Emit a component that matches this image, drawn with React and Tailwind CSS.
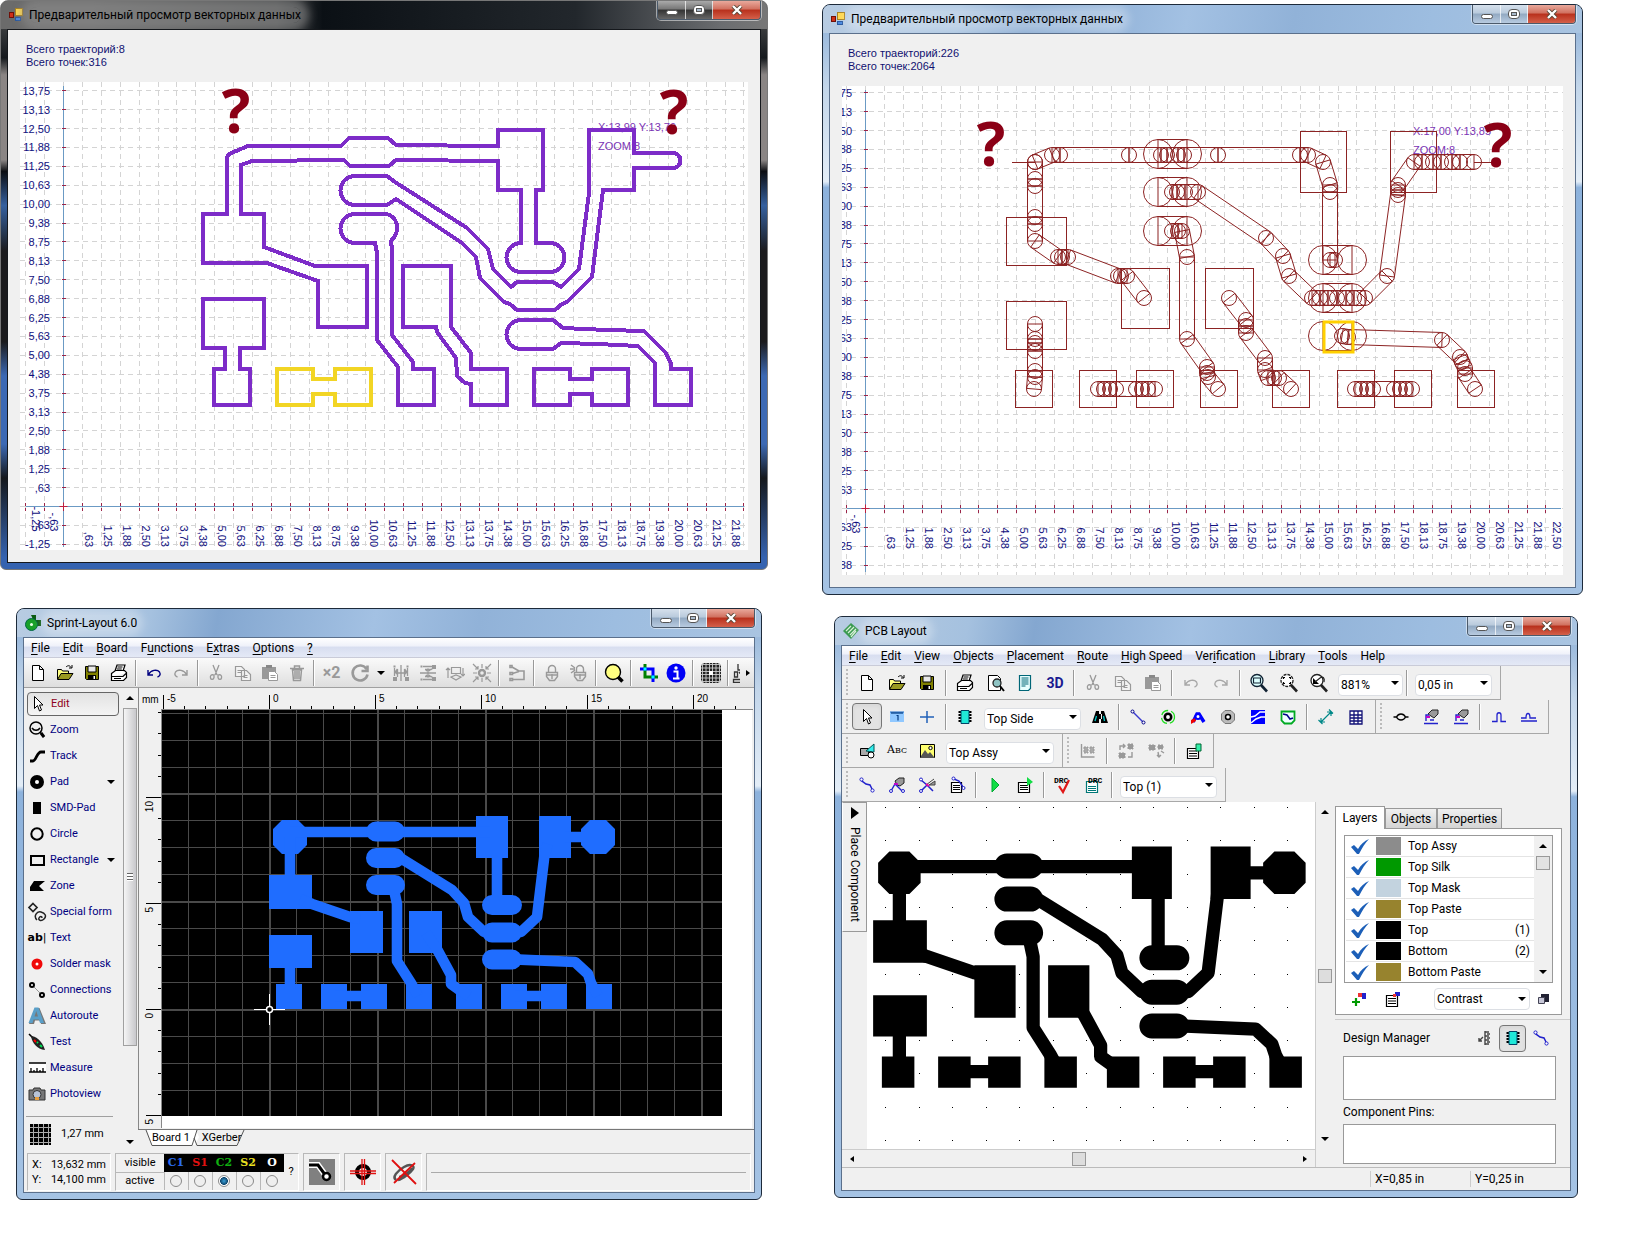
import { useState } from 'react'
import clsx from 'clsx'

const GLYPHS = {
  new: <path d="M4.5 2.5h7l4 4v11h-11zM11.5 2.5v4h4" fill="#fff" stroke="#000" />,
  open: <><path d="M2.5 16V6.500h4l1 1.500h6v3" fill="#ffff80" stroke="#000" /><path d="M2.500 16.500l3.500-6h12l-4 6z" fill="#9a9a20" stroke="#000" /><path d="M11 4c2-2 4-1.500 5 0.500M17 2v3h-3" fill="none" stroke="#000" /></>,
  save: <><path d="M3.500 3.500h13v13h-12l-1-1z" fill="#808000" stroke="#000" /><path d="M6 3h8v6H6z" fill="#e8e8e8" stroke="#000" /><path d="M6 12h8v4.500H6z" fill="#000" /><path d="M11.500 13h1.500v3h-1.500z" fill="#fff" /></>,
  print: <path d="M6 8l2-6h8l-2 6M8.500 4h5M7.800 6h5M2.500 10.500l4-3h9l2 2v5l-3 3h-12zM2.500 13.500h11.500l3-3M5 15.500h7" fill="#fff" stroke="#000" strokeWidth="1.200" />,
  undo: <path d="M4 7v5h5M4.500 11.500C7 7 13 6 15.500 9c1.500 2.500 0 4.500-2 5" fill="none" stroke="currentColor" strokeWidth="1.400" />,
  redo: <path d="M16 7v5h-5M15.500 11.500C13 7 7 6 4.500 9c-1.500 2.500 0 4.500 2 5" fill="none" stroke="currentColor" strokeWidth="1.400" />,
  cut: <path d="M7 2l4 10M13 2L9 12M8 12c-3-1-4 1-3.500 3s3 2 3.500-0.500zM12 12c3-1 4 1 3.500 3s-3 2-3.500-0.500z" fill="none" stroke="#999" strokeWidth="1.300" />,
  copy: <path d="M2.500 3.500h6l3 3v7h-9zM4.500 7.500h4M4.500 9.500h4M8.500 7.500h5l4 4v6h-9zM10.500 12.500h4M10.500 14.500h4" fill="#f3f3f3" stroke="#999" strokeWidth="1.200" />,
  paste: <><path d="M2 4h14v12H2z" fill="#999" /><path d="M6 2h6v3H6z" fill="#888" /><path d="M8.500 8.500h6l3 3v6h-9zM10.500 12.500h5M10.500 14.500h5" fill="#fff" stroke="#999" /></>,
  trash: <path d="M3 5.500h14M7.500 5V3h5v2M5.500 7h9l-1 10.500h-7zM8 8v8M10 8v8M12 8v8" fill="none" stroke="#999" strokeWidth="1.500" />,
  rotate: <path d="M16.500 6a7.500 7.500 0 1 0 1 5.500M17.500 2.500v5.500h-6" fill="none" stroke="#999" strokeWidth="2.600" />,
  mirrorH: <><path d="M10 2v16M3.500 5v8M16.500 5v8M6.500 6l-3 4M13.500 6l3 4M6.500 6v8M13.500 6v8M5.500 10h9M7 8l-2 2 2 2M13 8l2 2-2 2" fill="none" stroke="#999" strokeWidth="1.300" /><path d="M3.500 2.500v2M16.500 2.500v2M3 15h2v2H3zM15 15h2v2h-2z" fill="none" stroke="#999" strokeWidth="2" /></>,
  mirrorV: <><path d="M2 10h16M5 3.500h9M5 16.500h9M7 6.500h6l3-2M7 13.500h6l3 2M10 6v8M8 8l2-2 2 2M8 12l2 2 2-2" fill="none" stroke="#999" strokeWidth="1.300" /><path d="M2.500 3.500h2M2.500 16.500h2M15 3h2v2h-2zM15 15h2v2h-2z" fill="none" stroke="#999" strokeWidth="2" /></>,
  flip: <path d="M3 15V5M1 7l2-2 2 2M6.500 4.500h9v6h-9zM18 5v8M16 11l2 2 2-2M6 14l5-2 5 2-5 3z" fill="none" stroke="#999" strokeWidth="1.200" />,
  snap: <><circle cx="10" cy="10" r="3" fill="none" stroke="#999" strokeWidth="2.400" /><path d="M1 1l5 5M6 3v3H3M19 1l-5 5M14 3v3h3M1 19l5-5M3 14h3v3M19 19l-5-5M17 14h-3v3M10 1v4M10 15v4M1 10h4M15 10h4" fill="none" stroke="#999" strokeWidth="1.200" /></>,
  link: <path d="M3 2.500h2v2H3zM3 15.500h2.500v2H3zM3 9.500h2.500v2H3zM5 4l7 4M5.500 10.500l6.500-2M6 16.500h11V8h-5" fill="none" stroke="#999" strokeWidth="1.600" />,
  lock: <path d="M6.500 9V6a3.500 3.500 0 0 1 7 0v3M4.500 9.500h11v4l-3 4h-5l-3-4zM4.500 12h11M10 11v5" fill="none" stroke="#999" strokeWidth="1.400" />,
  unlock: <path d="M7.500 9V6a3.500 3.500 0 0 1 7 0v3M5.500 9.500h11v4l-3 4h-5l-3-4zM5.500 12h11M11 11v5M1 6h5M2 2l4 3M2 10l4-3" fill="none" stroke="#999" strokeWidth="1.400" />,
  bulb: <><circle cx="9" cy="9" r="7.500" fill="#ffff80" stroke="#000" strokeWidth="1.400" /><path d="M14 14l4.500 4.500" stroke="#000" strokeWidth="3.500" /></>,
  crop: <><path d="M6 1v13h13" fill="none" stroke="#008000" strokeWidth="3" /><path d="M1 6h13v13" fill="none" stroke="#00f" strokeWidth="3" /><path d="M4.500 4.500h3v3h-3zM12.500 12.500h3v3h-3z" fill="#0ff" /></>,
  info: <><circle cx="10" cy="10" r="9.500" fill="#0000f5" /><circle cx="10" cy="5" r="1.700" fill="#fff" /><path d="M7.500 8.500h4v6.500M7 15.500h6.500" stroke="#fff" strokeWidth="2" fill="none" /></>,
  dots: <><path d="M3 0h14l3 3v14l-3 3H3l-3-3V3z" fill="#222" /><path d="M1.500 0v20M5 0v20M8.500 0v20M11.500 0v20M15 0v20M18.500 0v20M0 1.500h20M0 5h20M0 8.500h20M0 11.500h20M0 15h20M0 18.500h20" stroke="#ccc" strokeWidth=".9" /><path d="M8 8h4v4H8z" fill="#fff" /></>,
  board: <path d="M6 1v6h4M2.500 9h3v5h-3zM7 9l4 5M1.500 16.500h10v3h-10z" fill="none" stroke="#333" strokeWidth="1.300" />,
  cursor: <path d="M6.500 2.500v12l3-3 2 5.500 2-1-2-5h3.500z" fill="#fff" stroke="#000" />,
  zoom: <><circle cx="9" cy="8" r="6" fill="#eee" stroke="#000" strokeWidth="1.500" /><path d="M5 8c2 3 6 3 8 0M13 12l4 5" fill="none" stroke="#000" strokeWidth="1.500" /><path d="M14 13l3 4" stroke="#000" strokeWidth="3" /></>,
  track: <path d="M3 15h3c3 0 4-9 8-9h4" fill="none" stroke="#000" strokeWidth="2.800" />,
  pad: <circle cx="10" cy="10" r="4.500" fill="#fff" stroke="#000" strokeWidth="5" />,
  smd: <path d="M6 4h8v12H6z" fill="#000" />,
  circle: <circle cx="10" cy="10" r="5.700" fill="none" stroke="#000" strokeWidth="2" />,
  rect: <path d="M4 6h13v9H4z" fill="none" stroke="#000" strokeWidth="2" />,
  zone: <path d="M3 15v-4l4-6h11l-6 5 5 5z" fill="#000" />,
  special: <><path d="M6 1.500l4 4-4 4-4-4z" fill="none" stroke="#222" strokeWidth="1.700" /><path d="M10 18c-4-4 0-9 4-8s6 4 3 7-6 1-5-1 3-2 3 0" fill="none" stroke="#222" strokeWidth="1.500" /></>,
  mask: <circle cx="10" cy="10" r="3.500" fill="#fff" stroke="#f00808" strokeWidth="4" />,
  conn: <><path d="M5 5l10 10" stroke="#999" /><circle cx="5" cy="5" r="2" fill="#fff" stroke="#000" strokeWidth="2" /><circle cx="15" cy="15" r="2" fill="#fff" stroke="#000" strokeWidth="2" /></>,
  auto: <><path d="M2 18L8.500 2h4L19 18h-5l-1-3.500H8L7 18z" fill="#777" /><path d="M1.500 17L7.500 1.500h4L17 17h-4l-1.200-3.500H6.500L5.500 17zM7.500 10.500h3.500L9.300 5z" fill="#5a9fc8" /></>,
  test: <><path d="M2 2l5 5" stroke="#000" strokeWidth="1.600" /><path d="M4 4c4 0 11 4 14 14-8-1-13-7-14-14z" fill="#222" /><path d="M10 10l1 1M13 13l2 2" stroke="#0d5" strokeWidth="2" /><path d="M7 8l2 2" stroke="#f00" strokeWidth="2" /></>,
  measure: <><path d="M2 5h17v9H2z" fill="#fff" /><path d="M2 5h17M2 14h17M4 14v-4M7 14v-2M10 14v-4M13 14v-2M16 14v-4" stroke="#000" strokeWidth="1.300" /></>,
  photo: <><path d="M2 6h4l1-2h6l1 2h4v10H2z" fill="#777" stroke="#333" /><circle cx="10" cy="10.500" r="4" fill="#b8c4d8" stroke="#333" /><path d="M8 13h4v3H8z" fill="#e8a040" /></>,
  preview: <><path d="M3.500 2.500h9l3 3v12h-12z" fill="#fff" stroke="#000" /><circle cx="12" cy="10" r="4" fill="#8fc4c4" stroke="#222" strokeWidth="1.300" /><path d="M15 13l4 5" stroke="#000" strokeWidth="2" /></>,
  doc: <path d="M4.500 2.500h11v13l-2 2h-9zM6.500 5h7M6.500 7h7M6.500 9h7M6.500 11h7M6.500 13h4" fill="#e8ffff" stroke="#067" strokeWidth="1.200" />,
  magBox: <><circle cx="8" cy="7.500" r="6" fill="#dff" stroke="#123" strokeWidth="1.300" /><path d="M4.500 5h7v5h-7z" fill="none" stroke="#123" strokeWidth="1.200" /><path d="M12 12l6 6.500" stroke="#123" strokeWidth="2.600" /></>,
  magFit: <><circle cx="8" cy="7.500" r="6" fill="#fff" stroke="#222" strokeWidth="1.300" strokeDasharray="3 1" /><path d="M4.500 6V4.500H6M10 4.500h1.500V6M4.500 9v1.500H6M10 10.500h1.500V9" fill="none" stroke="#000" strokeWidth="1.200" /><path d="M12 12l6 6.500" stroke="#222" strokeWidth="2.600" /></>,
  magPrev: <><circle cx="8" cy="7.500" r="6" fill="#fff" stroke="#222" strokeWidth="1.300" /><path d="M4 5v6h6z" fill="#000" /><path d="M6 9l5-4c3-2 5 0 4 4" fill="none" stroke="#222" strokeWidth="1.200" /><path d="M12 12l6 6.500" stroke="#222" strokeWidth="2.600" /></>,
  ruler: <><path d="M3 5h14v10H3z" fill="#90c8ff" /><path d="M3 5h14" stroke="#1c6cc8" /><path d="M5 5v2M7 5v2M9 5v2M11 5v2M13 5v2M15 5v2M9.500 8.500h1.500v5" fill="none" stroke="#013a80" strokeWidth="1.200" /></>,
  plus: <path d="M10 4v12M3 10h14" stroke="#2060b8" strokeWidth="1.500" />,
  chip: <><path d="M3.500 5h13M3.500 8h13M3.500 11h13M3.500 14h13" stroke="#000" strokeWidth="2" /><path d="M6 3.500h8v13H6z" fill="#20e8d8" stroke="#046" /></>,
  binoc: <><path d="M2 16l2-6 2-6h3v12zM18 16l-2-6-2-6h-3v12zM8 7h4v5H8z" fill="#000" /><path d="M5 14l1.500-5M14.500 14l-1-5" stroke="#0cc" strokeWidth="1.300" /></>,
  seg: <><path d="M5 5l10 10" stroke="#3a3ad0" strokeWidth="1.400" /><circle cx="4.500" cy="4.500" r="1.500" fill="#fff" stroke="#008" /><circle cx="15.500" cy="15.500" r="1.500" fill="#fff" stroke="#008" /></>,
  via: <><circle cx="10" cy="10" r="3.200" fill="#fff" stroke="#000" strokeWidth="2.600" /><circle cx="10" cy="10" r="6.500" fill="none" stroke="#2d2" strokeWidth="1.300" strokeDasharray="8 3" /></>,
  aTool: <><path d="M5 15l4-8h2l5 8" fill="none" stroke="#00f" strokeWidth="3.500" /><path d="M3 17v-4l4-2 1 3z" fill="#e00" /><circle cx="10" cy="9.500" r="2.500" fill="#fff" stroke="#00f" strokeWidth="2" /></>,
  hole: <><path d="M7 3.500h6L16.500 7v6L13 16.500H7L3.500 13V7z" fill="#bbb" stroke="#777" /><circle cx="10" cy="10" r="2.500" fill="#fff" stroke="#000" strokeWidth="1.500" /></>,
  pour: <><path d="M3 3h14v14H3z" fill="#00f" /><path d="M3 10l4-1 5-4h5M3 16l5-4 5-2 4 0" fill="none" stroke="#fff" strokeWidth="1.500" /></>,
  shape: <><path d="M3.500 4.500h13v9l-3 3h-7l-3-3z" fill="#eff" stroke="#0a2" strokeWidth="1.800" /><path d="M5 7l4 1 3 4 3-1" fill="none" stroke="#008" strokeWidth="1.500" /></>,
  dim: <path d="M5 15L15 5M5 11v4h4M11 5h4v4M2.500 13l4 4M13 2.500l4 4" fill="none" stroke="#088" strokeWidth="1.200" />,
  table: <path d="M4 4h12v13H4zM4 8h12M4 11h12M4 14h12M8 4v13M12 4v13" fill="#fff" stroke="#117" strokeWidth="1.300" />,
  loop: <path d="M2.500 10h3c2-4 7-4 9 0h3M5.500 10c2 4 7 4 9 0" fill="none" stroke="#000" strokeWidth="1.400" />,
  hand: <><path d="M7 7l4-4h6v4l-4 4-3-2z" fill="#999" stroke="#222" /><path d="M5 14V8h3M3 16.500h14M9 13h4" fill="none" stroke="#22c" strokeWidth="1.400" /><path d="M5 10l4 0" stroke="#c0c" strokeWidth="1.800" /></>,
  pulse: <path d="M3 14.500h5V8c0-3 4-3 4 0v6.500h5" fill="none" stroke="#22c" strokeWidth="1.300" />,
  pulse2: <path d="M2 11h5c0-6 4-6 4 0h6M2 14h16" fill="none" stroke="#22c" strokeWidth="1.300" />,
  shapes: <><path d="M3.500 7.500h8v7h-8z" fill="#aaa" stroke="#000" /><path d="M9 10l8-7v8z" fill="#3ee" stroke="#055" /><circle cx="14" cy="14" r="3" fill="#fff" stroke="#000" /></>,
  image: <><path d="M3.500 3.500h14v13h-14z" fill="#ffff70" stroke="#000" /><path d="M4 15l4-6 3 4 2-2 4 5v1H4z" fill="#555" /><circle cx="13.500" cy="7" r="1.700" fill="#fff" stroke="#000" /></>,
  align: <><path d="M3.500 3v13h13" fill="none" stroke="#999" strokeWidth="1.400" /><path d="M6 6h4v6H6zM12 6h4v6h-4z" fill="#aaa" stroke="#999" strokeDasharray="2 1" /></>,
  group: <><path d="M12 3h5v5h-5zM3 12h6v5H3z" fill="#999" stroke="#999" strokeDasharray="2 1" /><path d="M4 9V5h5M7 3l2 2-2 2M16 11v5h-4" fill="none" stroke="#999" strokeWidth="1.400" /></>,
  ungroup: <><path d="M3 4h6v5H3zM12 4h5v4h-5z" fill="#999" stroke="#999" strokeDasharray="2 1" /><path d="M12 11l1 5M15 10l3 2M11 14l2 2 2-2" fill="none" stroke="#999" strokeWidth="1.400" /></>,
  props: <><path d="M3.500 7.500h11v10h-11zM5 10h8M5 12.500h8M5 15h8" fill="#fff" stroke="#000" strokeWidth="1.200" /><path d="M12 3h5v7h-5z" fill="#3ea" stroke="#063" /></>,
  route: <><path d="M5 5v1l4 3 4 1 2 4" fill="none" stroke="#22c" strokeWidth="1.500" /><circle cx="4.500" cy="4.500" r="1.600" fill="#fff" stroke="#22c" /><circle cx="15.500" cy="15.500" r="1.600" fill="#fff" stroke="#22c" /></>,
  routeHand: <><path d="M8 6l4-3h5v5l-4 3-3-1z" fill="#999" stroke="#222" /><path d="M4 16l4-7 7 7" fill="none" stroke="#22c" strokeWidth="1.400" /><circle cx="4" cy="16" r="1.500" fill="#fff" stroke="#22c" /><circle cx="16" cy="16" r="1.500" fill="#fff" stroke="#22c" /><path d="M7 9h4" stroke="#c0c" strokeWidth="1.800" /></>,
  routeCut: <><path d="M4 5l6 5-6 6M10 10l6 6" fill="none" stroke="#22c" strokeWidth="1.500" /><path d="M9 10l8-6M12 10l6-4v4z" stroke="#444" fill="#999" /><path d="M9 9l3 2" stroke="#e0a" strokeWidth="2" /><circle cx="4" cy="4.500" r="1.500" fill="#fff" stroke="#22c" /><circle cx="4" cy="16" r="1.500" fill="#fff" stroke="#22c" /></>,
  routeList: <><path d="M4.500 7.500h10v10h-10zM6 10.500h7M6 12.500h7M6 14.500h7" fill="#fff" stroke="#000" strokeWidth="1.200" /><path d="M7 4l5 2 4 6" fill="none" stroke="#22c" strokeWidth="1.400" /><circle cx="6.500" cy="3.500" r="1.500" fill="#fff" stroke="#22c" /><circle cx="16.500" cy="13" r="1.500" fill="#fff" stroke="#22c" /></>,
  play: <path d="M7 3l7 7-7 7z" fill="#1d4" stroke="#0a3" />,
  playList: <><path d="M3.500 7.500h11v10h-11zM5 10.500h8M5 12.500h8M5 14.500h8" fill="#fff" stroke="#000" strokeWidth="1.200" /><path d="M12 2l6 5-6 4z" fill="#1d4" /></>,
  drc: <><text x="1" y="8" fontSize="8" fontWeight="bold" fontFamily="Liberation Mono, monospace">DRC</text><path d="M6 11l4 6 6-12" fill="none" stroke="#e01818" strokeWidth="2.200" /></>,
  drcList: <><path d="M3.500 6.500h11v11h-11zM5 11.500h8M5 13.500h8M5 15.500h8" fill="#fff" stroke="#077" strokeWidth="1.200" /><text x="5" y="8" fontSize="8" fontWeight="bold" fontFamily="Liberation Mono, monospace">DRC</text></>,
  addLayer: <><path d="M3 13h8M7 9v8" stroke="#090" strokeWidth="2.200" /><path d="M9 4h4v4H9z" fill="#e33" /><path d="M13 4h4v6h-4z" fill="#22c" /></>,
  layerList: <><path d="M3.500 6.500h11v11h-11zM5 9.500h8M5 12h8M5 14.500h8" fill="#fff" stroke="#000" strokeWidth="1.200" /><path d="M12 3h5v4h-5z" fill="#22c" /><path d="M10 5h3v3h-3z" fill="#e33" /></>,
  squares: <><path d="M7 5h8v8H7z" fill="#223" /><path d="M4.500 8.500h6v6h-6z" fill="#c8c8d8" stroke="#445" /></>,
  tree: <path d="M11 3v14M11 4h4M11 8h4M11 12h4M11 16h4M9 9L5 13M5 10v3h3M13 6h3M13 10h3M13 14h3" fill="none" stroke="#444" strokeWidth="1.400" />,
}

function Glyph({ name }) {
  return <svg viewBox="0 0 20 20" className="size-5 shrink-0" aria-hidden="true">{GLYPHS[name]}</svg>
}

function Caret({ className }) {
  return <svg viewBox="0 0 8 4" className={clsx('h-1 w-2', className)} aria-hidden="true"><path d="M0 0h8L4 4z" /></svg>
}

/* ---------- window frame ---------- */

const frames = {
  dark: 'border-[#777] bg-[linear-gradient(180deg,#5a5a5a_0,#15191d_10%,#8a8584_13%,#8a8584_28%,#0c0e12_30%,#35609f_36%,#1b1b1d_44%,#1b1b1d_60%,#3c69b4_66%,#3c69b4_78%,#15181c_84%,#3563b0_98%)]',
  blue: 'border-[#1d2a3a] bg-[linear-gradient(180deg,#9dbbdd_0,#9dbbdd_5%,#c3d6ea_14%,#e3edf7_30%,#8db2dc_31%,#a5c3e4_100%)]',
}
const bars = {
  dark: 'bg-[linear-gradient(90deg,#6b6b6b_0,#6b6b6b_12%,#454748_36%,#0b1015_42%,#22272c_75%,#6b6d70_94%,#777_100%)]',
  blue: 'bg-[linear-gradient(100deg,#b8cce2_0,#a5c1df_18%,#84a7d0_27%,#a3c1e3_48%,#91b2d8_62%,#9dbde0_80%,#a9c4e1_100%)]',
}

function Window({ title, icon, tone = 'blue', className, children }) {
  const btn = 'flex items-center justify-center border-r border-white/70'
  const btnTone = tone === 'dark'
    ? 'bg-[linear-gradient(180deg,#aaa_0,#777_45%,#333_50%,#666_100%)]'
    : 'bg-[linear-gradient(180deg,#d5e0ec_0,#b9cadc_45%,#92a9c2_50%,#b8cbe0_100%)]'
  return (
    <section className={clsx('flex flex-col overflow-hidden rounded-t-lg rounded-b-md border px-[6px] pb-[6px]', frames[tone], className)}>
      <header className={clsx('-mx-[6px] flex h-7 items-start justify-between px-[6px]', bars[tone])}>
        <div className="flex h-7 items-center gap-[6px] pl-[2px] text-xs text-black">
          {icon}
          <h2 className={clsx('rounded-full', tone === 'dark' ? 'bg-[#8c8c8c]/60 shadow-[0_0_8px_8px_rgba(140,140,140,0.6)]' : 'bg-white/30 shadow-[0_0_8px_6px_rgba(255,255,255,0.3)]')}>{title}</h2>
        </div>
        <div className="flex h-[19px] overflow-hidden rounded-b border border-t-0 border-[#4b5a6b] ring-1 ring-white/50">
          <button type="button" aria-label="Minimize" className={clsx(btn, btnTone, 'w-7')}>
            <span className="mt-1 h-[5px] w-3 rounded-sm border border-[#555] bg-white" />
          </button>
          <button type="button" aria-label="Maximize" className={clsx(btn, btnTone, 'w-[27px]')}>
            <span className="flex h-[10px] w-3 items-center justify-center rounded-sm border border-[#555] bg-white">
              <span className="h-1 w-[6px] border border-[#555] bg-[#abc]" />
            </span>
          </button>
          <button type="button" aria-label="Close" className="flex w-[47px] items-center justify-center bg-[linear-gradient(180deg,#e9a99c_0,#d0705f_45%,#b8301c_50%,#d4604a_100%)]">
            <svg viewBox="0 0 12 10" className="h-[10px] w-3" aria-hidden="true">
              <path d="M2 1l8 8M10 1L2 9" stroke="#543" strokeWidth="4" />
              <path d="M2 1l8 8M10 1L2 9" stroke="#fff" strokeWidth="2.400" />
            </svg>
          </button>
        </div>
      </header>
      <div className={clsx('border bg-[#f0f0f0]', tone === 'dark' ? 'border-[#15181c]' : 'border-[#5b708c]')}>{children}</div>
    </section>
  )
}

const FormIcon = () => (
  <svg viewBox="0 0 14 14" className="size-[14px]" aria-hidden="true">
    <rect x=".5" y="4.500" width="4" height="5" fill="#d03018" stroke="#701008" />
    <rect x="6.500" y=".5" width="7" height="7" fill="#ffd850" stroke="#a88020" />
    <rect x="6.500" y="9.500" width="5" height="3" fill="#4888e0" stroke="#2858a0" />
  </svg>
)

/* ---------- vector preview ---------- */

const fmt = n => {
  const s = Math.abs(n).toFixed(3)
  const r = (Math.round(Number(s) * 100 + 0.01) / 100).toFixed(2).replace('.', ',').replace(/^0/, '')
  return (n < 0 ? '-' : '') + r
}
const range = (a, b) => Array.from({ length: b - a + 1 }, (_, i) => a + i)
const PITCH = 18.9

function Plot({ box, ox, oy, left, down, right, labelX, labelEnd, last, hint, marks, children }) {
  const [bx, by, bw, bh] = box
  const xs = range(-left, 36)
  const ys = range(-down, 22)
  return (
    <svg viewBox={box.join(' ')} className="block h-auto w-full bg-white font-['Liberation_Sans',Arial,sans-serif]" fontSize="11" role="img" aria-label="Vector data preview">
      <g shapeRendering="crispEdges">
        <g stroke="#d4d4d4" strokeDasharray="5 4">
          {xs.map(k => <path key={k} d={`M${ox + k * PITCH} ${by}v${bh}`} />)}
          {ys.map(k => <path key={k} d={`M${bx} ${oy - k * PITCH}h${bw}`} />)}
        </g>
        <path d={`M${ox} ${by + 4}V${by + bh - 3}M${ox - left * PITCH} ${oy}H${right}`} stroke="#6b9ac4" fill="none" />
        <g stroke="#9c2448">
          {xs.map(k => <path key={k} d={`M${ox + k * PITCH} ${oy - 4}v3m0 2v3`} />)}
          {ys.map(k => <path key={k} d={`M${ox - 2} ${oy - k * PITCH}h4`} />)}
        </g>
      </g>
      <path d={`M${ox - 4} ${oy}h8M${ox} ${oy - 4}v8`} stroke="#c02040" />
      <g fill="#101080">
        {ys.filter(k => k !== 0).map(k => (
          <text key={k} x={labelX} y={oy - k * PITCH + 4} textAnchor="end">{fmt(k * 0.625)}</text>
        ))}
        {xs.filter(k => k > 0 && k <= last).map(k => (
          <text key={k} textAnchor="end" transform={`translate(${ox + 21 + (k - 1) * 19.05} ${labelEnd}) rotate(90)`}>{fmt(k * 0.625)}</text>
        ))}
        {xs.filter(k => k < 0).map(k => (
          <text key={k} textAnchor="end" transform={`translate(${ox - 14 + (k + 1) * 18} ${oy + 25}) rotate(90)`}>{fmt(k * 0.625)}</text>
        ))}
      </g>
      <g fill="#7b34b4">
        <text x={hint.x} y={hint.y}>{hint.pos}</text>
        <text x={hint.x} y={hint.y + 19}>ZOOM:8</text>
      </g>
      {children}
      <g fill="#8b0016" fontSize="60" fontWeight="bold" className="font-['Open_Sans',sans-serif]" textAnchor="middle">
        {marks.map(([x, y]) => <text key={x} x={x} y={y}>?</text>)}
      </g>
    </svg>
  )
}

function Preview({ tracks, points, children, ...win }) {
  return (
    <Window title="Предварительный просмотр векторных данных" icon={<FormIcon />} {...win}>
      <div className="p-3 pt-0">
        <div className="flex h-[52px] flex-col justify-center pl-[6px] pb-2 pt-2 font-['Liberation_Sans',Arial,sans-serif] text-[11px] leading-[13px] text-[#101070]">
          <p>Всего траекторий:{tracks}</p>
          <p>Всего точек:{points}</p>
        </div>
        {children}
      </div>
    </Window>
  )
}

const outlines = [
  'M203 214H227V157L229 154 248 146H341L349 138H388L396 145 498 146V130H543V190H536V243H550A14.500 14.500 0 0 1 550 272H521A14.500 14.500 0 0 1 521 243V190H498V161L396 160 389 166H350L344 160 252 161 241 165V214H264V247L315 266H367V327H318V281L267 263H203Z',
  'M355 176H387L395 182 467 228 488 249 493 269 511 287 517 282H553L561 287 579 269 589 193V130H634V153H673A7.500 7.500 0 0 1 673 168H634V190H603L592 277 567 302 562 304 555 310H517L510 304 504 302 480 278 476 257 462 243 396 199 387 205H355A14.500 14.500 0 0 1 355 176Z',
  'M355 214H384C397 214 402 230 391 241L392 250V335L413 362V369H434V405H398V367L377 340V253L375 243H355A14.500 14.500 0 0 1 355 214Z',
  'M403 266H451V327L471 353V369H507V405H471V384L465 383 457 376 456 358 437 332 436 327H403Z',
  'M203 299H264V348H240V369H250V405H214V369H225V348H203Z',
  'M534 369H570V379H592V369H628V405H592V394H570V405H534Z',
  'M521 320H553L563 328 607 330 644 331 665 352 671 363V369H691V405H655V363L638 346 598 344 561 343 553 349H521A14.500 14.500 0 0 1 521 320Z',
]

const runs = [
  [[1035, 162], [1052, 155], [1060, 155], [1129, 155], [1161, 155], [1167, 155], [1178, 155], [1184, 155], [1218, 155], [1300, 155], [1308, 155], [1323, 162], [1330, 185], [1330, 192], [1330, 260], [1335, 260]],
  [[1035, 162], [1035, 179], [1035, 186], [1035, 217], [1035, 224], [1035, 241], [1058, 257], [1062, 257], [1068, 257], [1118, 276], [1121, 276], [1127, 276], [1144, 298]],
  [[1172, 192], [1177, 192], [1185, 192], [1198, 192], [1266, 238], [1283, 256], [1289, 276], [1312, 298], [1320, 298], [1328, 298], [1337, 298], [1346, 298], [1354, 298], [1365, 298], [1387, 276], [1398, 195], [1398, 190], [1398, 185], [1414, 162], [1422, 162], [1433, 162], [1441, 162], [1452, 162], [1460, 162], [1474, 162]],
  [[1172, 231], [1178, 231], [1182, 231], [1187, 257], [1187, 339], [1207, 367], [1207, 373], [1208, 377], [1218, 389]],
  [[1229, 298], [1246, 320], [1246, 326], [1246, 333], [1265, 358], [1265, 370], [1268, 378], [1274, 378], [1279, 378], [1291, 389]],
  [[1035, 324], [1035, 339], [1035, 343], [1035, 351], [1035, 371], [1035, 377], [1034, 389]],
  [[1098, 389], [1104, 389], [1110, 389], [1116, 389], [1136, 389], [1142, 389], [1148, 389], [1155, 389]],
  [[1355, 389], [1361, 389], [1367, 389], [1373, 389], [1394, 389], [1400, 389], [1406, 389], [1412, 389]],
  [[1342, 336], [1348, 337], [1442, 340], [1460, 357], [1462, 362], [1465, 368], [1465, 374], [1475, 389]],
]
const pads = [
  [1006, 217, 60, 48], [1006, 301, 60, 48], [1121, 268, 48, 60], [1205, 268, 48, 60], [1300, 131, 46, 61], [1390, 131, 46, 61],
  ...[1015, 1079, 1136, 1200, 1272, 1337, 1394, 1457].map(x => [x, 370, 37, 37]),
]
const ovals = [[1158, 154], [1158, 192], [1158, 231], [1323, 260], [1323, 298], [1323, 336]]

// one capsule per segment: two sides and a chord across each end
function segment([x1, y1], [x2, y2], r = 7.5) {
  const len = Math.hypot(x2 - x1, y2 - y1) || 1
  const nx = (-(y2 - y1) / len) * r
  const ny = ((x2 - x1) / len) * r
  return `M${x1 + nx} ${y1 + ny}L${x2 + nx} ${y2 + ny}L${x2 - nx} ${y2 - ny}L${x1 - nx} ${y1 - ny}Z`
}

/* ---------- board artwork shared by both editors ---------- */

const octagon = (cx, cy) => `M${cx - 8} ${cy - 17}h16l9 9v16l-9 9h-16l-9-9v-16z`

function Copper({ color }) {
  return (
    <g fill={color} stroke="none">
      <path d={octagon(290, 838) + octagon(598, 838)} />
      <path d="M269 876h43v34h-43zM269 936h43v33h-43zM350 912h33v42h-33zM409 912h33v42h-33zM476 817h32v42h-32zM539 817h32v42h-32z" />
      {[276, 321, 361, 406, 456, 501, 541, 586].map(x => <path key={x} d={`M${x} 985h26v25h-26z`} />)}
      <g fill="none" stroke={color} strokeWidth="10.600" strokeLinejoin="round">
        <path d="M290 838V880M290 833H490M497 855V906M290 965V990M335 997H370M515 997H550M565 838H585" />
        <path d="M300 900L312 905 350 918 360 920M394 859L402 860 452 891 464 904 468 918 484 933H521L537 918 544.500 856 548 845" />
        <path d="M393 886L397 905V962L411 984 418 997M426 934L438 952 451 976V985L458 990 469 997M505 960L575 963 588 975 591 984 598 997" />
      </g>
      <g fill="none" stroke={color} strokeWidth="20" strokeLinecap="round">
        <path d="M376 832.500h19M376 859h19M376 886h19M492 906h20M492 933.500h20M492 960.500h20" />
      </g>
    </g>
  )
}

/* ---------- controls ---------- */

function Menu({ items }) {
  return (
    <nav className="flex h-5 items-center gap-[13px] border-b border-[#c9cbd8] bg-[linear-gradient(180deg,#fff_0,#f0f2fa_40%,#d8def0_50%,#e4e9f6_100%)] pl-[7px] text-xs text-black">
      {items.map(([before, key, after]) => (
        <button type="button" key={before + key + after} className="whitespace-nowrap">{before}<u className="underline-offset-2">{key}</u>{after}</button>
      ))}
    </nav>
  )
}

function Sep() {
  return <span className="mx-[3px] h-[26px] w-[2px] shrink-0 border-l border-[#999] bg-white" />
}

function Grip() {
  return <span className="mx-1 h-7 w-[2px] shrink-0 bg-[repeating-linear-gradient(180deg,#bbb_0,#bbb_2px,transparent_2px,transparent_4px)]" />
}

function Tool({ name, wide, pressed, className }) {
  return (
    <button type="button" aria-label={name} className={clsx('flex h-[27px] shrink-0 items-center justify-center', wide ? 'w-[30px]' : 'w-[27px]', pressed && 'rounded border border-[#777] bg-[#e2e2e2] shadow-inner', className)}>
      <Glyph name={name} />
    </button>
  )
}

function Combo({ label, value, className }) {
  return (
    <div className={clsx('relative h-[22px] shrink-0', className)}>
      <select aria-label={label} className="h-full w-full appearance-none rounded-sm border border-[#dcdfe4] bg-white px-[2px] text-xs leading-4 text-black">
        <option>{value}</option>
      </select>
      <Caret className="pointer-events-none absolute right-1 top-[9px]" />
    </div>
  )
}

function Strip({ items }) {
  return (
    <div className="flex h-[34px] items-center border-b border-r border-[#a8a8a8] pr-1">
      <Grip />
      {items.map((it, i) => {
        if (it === '|') return <Sep key={i} />
        if (typeof it !== 'string') return <span key={i} className="contents">{it}</span>
        const off = it.startsWith('~')
        return <Tool key={i} name={off ? it.slice(1) : it} wide className={off && 'text-[#a8a8a8]'} />
      })}
    </div>
  )
}

/* ---------- Sprint-Layout ---------- */

const sideTools = [
  ['cursor', 'Edit'], ['zoom', 'Zoom'], ['track', 'Track'], ['pad', 'Pad', true], ['smd', 'SMD-Pad'], ['circle', 'Circle'],
  ['rect', 'Rectangle', true], ['zone', 'Zone'], ['special', 'Special form'], ['text', 'Text'], ['mask', 'Solder mask'],
  ['conn', 'Connections'], ['auto', 'Autoroute'], ['test', 'Test'], ['measure', 'Measure'], ['photo', 'Photoview'],
]
const layers = [['C1', 'text-[#2b6cf0]'], ['S1', 'text-[#e01010]'], ['C2', 'text-[#10b010]'], ['S2', 'text-[#e8e020]'], ['O', 'text-white']]

function SprintCanvas() {
  return (
    <svg viewBox="138 689 616 441" className="block h-auto w-full font-['Liberation_Sans',Arial,sans-serif]" fontSize="10" role="img" aria-label="Board">
      <rect x="162" y="711" width="590" height="418" fill="#fff" />
      <rect x="162" y="711" width="560" height="406" fill="#000" />
      <g shapeRendering="crispEdges" stroke="#4a4a4a" fill="none">
        {range(-3, 16).map(k => <path key={k} strokeWidth={k % 4 ? 1 : 2} d={`M${269.5 + k * 27} 711v406`} />)}
        {range(-3, 11).map(k => <path key={k} strokeWidth={k % 4 ? 1 : 2} d={`M162 ${1010.500 - k * 26.930}h560`} />)}
      </g>
      <Copper color="#1f6dff" />
      <g stroke="#fff" fill="none">
        <path d="M254 1010.500h12M273 1010.500h12M269.500 995v12M269.500 1014v12" />
        <circle cx="269.500" cy="1010.500" r="3" fill="#000" strokeWidth="1.500" />
      </g>
      <g shapeRendering="crispEdges" stroke="#000" fill="none">
        <path d="M138.500 689v441M161.500 710v419M161.500 710.500h591" stroke="#888" />
        {range(-5, 25).map(k => <path key={k} d={`M${269.500 + k * 21.200} 709.500v-${k % 5 ? 3 : 14}`} />)}
        {range(-5, 14).map(k => <path key={k} d={`M160.500 ${1010.500 - k * 21.200}h-${k % 5 ? 3 : 15}`} />)}
      </g>
      <text x="142" y="704">mm</text>
      {[-5, 0, 5, 10, 15, 20].map(n => <text key={n} x={273 + n * 21.200} y="703">{n}</text>)}
      {[[10, 798], [5, 904], [0, 1010], [5, 1116]].map(([n, y]) => (
        <text key={y} textAnchor="end" transform={`translate(153 ${y + 4}) rotate(-90)`}>{n}</text>
      ))}
    </svg>
  )
}

function SprintLayout() {
  const [active, setActive] = useState('C2')
  const logo = (
    <svg viewBox="0 0 16 16" className="size-4" aria-hidden="true">
      <path d="M6 0h5v5h5v6h-5z" fill="#0a5a10" /><circle cx="6.500" cy="9.500" r="6" fill="#18a028" stroke="#064" /><circle cx="6.500" cy="9.500" r="1.500" fill="#e8ffe8" />
    </svg>
  )
  const cell = 'border border-[#b8b8b8] border-b-white border-r-white'
  return (
    <Window title="Sprint-Layout 6.0" icon={logo} className="ml-4 mr-[60px]">
      <Menu items={[['', 'F', 'ile'], ['', 'E', 'dit'], ['', 'B', 'oard'], ['F', 'u', 'nctions'], ['E', 'x', 'tras'], ['', 'O', 'ptions'], ['', '?', '']]} />
      <div className="flex h-[30px] items-center overflow-hidden border-b border-[#a0a0a0] bg-[linear-gradient(180deg,#fafafa,#dedede)] text-[#999]">
        <Tool name="new" /><Tool name="open" /><Tool name="save" /><Tool name="print" /><Sep />
        <Tool name="undo" className="text-[#000080]" /><Tool name="redo" /><Sep />
        <Tool name="cut" /><Tool name="copy" /><Tool name="paste" /><Tool name="trash" /><Sep />
        <button type="button" className="w-[27px] shrink-0 text-base font-bold leading-4">×2</button>
        <Tool name="rotate" wide />
        <span className="flex w-3 shrink-0 justify-center text-black"><Caret /></span>
        <Tool name="mirrorH" /><Tool name="mirrorV" /><Tool name="flip" /><Tool name="snap" /><Sep />
        <Tool name="link" /><Sep /><Tool name="lock" /><Tool name="unlock" /><Sep /><Tool name="bulb" /><Sep />
        <Tool name="crop" /><Tool name="info" /><Sep /><Tool name="dots" /><Sep />
        <span className="flex w-2 shrink-0 overflow-hidden"><Glyph name="board" /></span>
        <svg viewBox="0 0 4 6" className="ml-auto mr-1 h-[6px] w-1 shrink-0"><path d="M0 0l4 3-4 3z" /></svg>
      </div>
      <div className="flex">
        <div className="flex w-[97px] shrink-0 flex-col pt-1">
          {sideTools.map(([icon, label, more], i) => (
            <button
              type="button" key={label}
              className={clsx('ml-[3px] mb-[2px] flex h-6 w-[92px] items-center gap-[3px] text-[11px]', i ? 'text-[#000080]' : 'rounded-sm border border-[#666] bg-[linear-gradient(180deg,#e2e2e2,#f4f4f4)] text-[#900020]')}
            >
              {icon === 'text'
                ? <span className="w-5 font-['DejaVu_Sans',sans-serif] text-[11px] font-bold text-black">ab<span className="font-normal">|</span></span>
                : <Glyph name={icon} />}
              {label}
              {more && <Caret className="ml-auto mr-1 text-black" />}
            </button>
          ))}
          <div className="mt-2 mr-2 ml-[2px] flex h-9 items-center border-t border-[#a0a0a0] pl-1 text-[11px] text-black">
            <svg viewBox="0 0 21 21" className="size-[21px]"><path d="M0 0h21v21H0z" /><path d="M3.500 0v21M8.500 0v21M13.500 0v21M18.500 0v21M0 3.500h21M0 8.500h21M0 13.500h21M0 18.500h21" stroke="#aaa" /></svg>
            <span className="ml-[10px]">1,27 mm</span>
          </div>
        </div>
        <div className="flex w-[17px] shrink-0 flex-col items-center bg-[#f0f0f0] py-2">
          <Caret className="rotate-180" />
          <div className="mt-2 flex h-[338px] w-[14px] items-center justify-center border border-[#a0a0a0] bg-[linear-gradient(90deg,#f5f5f5,#c8c8cc)]">
            <span className="h-2 w-[6px] bg-[repeating-linear-gradient(180deg,#666_0,#666_1px,#fff_1px,#fff_3px)]" />
          </div>
          <Caret className="mt-auto" />
        </div>
        <div className="min-w-0 flex-1">
          <SprintCanvas />
          <div className="relative h-5 border-t border-[#777] text-[11px] text-black">
            <svg viewBox="0 0 125 18" className="absolute left-1 top-0 h-[18px] w-[125px]" aria-hidden="true">
              <path d="M5 0l5 15h43l4-8-3-7z" fill="#fff" /><path d="M4 0l6 15.500h40l5-15.500M52 8l3 7.500h40l7-15.500" fill="none" stroke="#555" />
            </svg>
            <div className="relative flex gap-3 pl-[14px]">
              <button type="button">Board 1</button>
              <button type="button">XGerber</button>
            </div>
          </div>
        </div>
      </div>
      <div className="flex h-10 items-stretch gap-1 pb-px pl-[3px] pr-[3px] pt-px text-[11px] text-black">
        <dl className={clsx(cell, 'grid w-[84px] shrink-0 grid-cols-[12px_1fr] content-center whitespace-nowrap pl-1 pr-1 leading-[15px]')}>
          <dt>X:</dt><dd className="text-right">13,632 mm</dd>
          <dt>Y:</dt><dd className="text-right">14,100 mm</dd>
        </dl>
        <div className={clsx(cell, 'flex w-[184px] shrink-0')}>
          <table className="h-full w-[168px] table-fixed border-collapse text-center">
            <tbody>
              <tr className="h-[18px]">
                <th className="w-12 font-normal">visible</th>
                {layers.map(([n, c]) => <td key={n} className={clsx("w-6 bg-black font-['DejaVu_Serif',serif] text-[11px] font-bold leading-4", c)}>{n}</td>)}
              </tr>
              <tr className="h-[18px]">
                <th className="border-t border-[#b8b8b8] font-normal">active</th>
                {layers.map(([n]) => (
                  <td key={n} className="border-l border-[#b8b8b8]">
                    <input
                      type="radio" name="layer" aria-label={n} checked={active === n} onChange={() => setActive(n)}
                      className="mx-auto block size-3 appearance-none rounded-full border border-[#8a8a8a] bg-[#eee] checked:bg-[radial-gradient(circle,#3aa0d8_0,#104870_50%,#fff_60%)]"
                    />
                  </td>
                ))}
              </tr>
            </tbody>
          </table>
          <span className="flex-1 self-center text-center">?</span>
        </div>
        <button type="button" aria-label="Track mode" className={clsx(cell, 'flex w-[37px] items-center justify-center')}>
          <svg viewBox="0 0 26 26" className="size-[26px]"><path d="M0 0h26v26H0z" fill="#808080" /><path d="M0 6h9l8 11" fill="none" stroke="#fff" strokeWidth="6" /><path d="M0 6h9l8 11" fill="none" stroke="#000" strokeWidth="3" /><circle cx="17.500" cy="17.500" r="3.500" fill="#fff" stroke="#000" strokeWidth="2.500" /></svg>
        </button>
        <button type="button" aria-label="Crosshair" className={clsx(cell, 'flex w-[37px] items-center justify-center')}>
          <svg viewBox="0 0 26 26" className="size-[26px]"><circle cx="13" cy="13" r="6" fill="none" stroke="#000" strokeWidth="4" /><path d="M12 0v26M14.500 0v26M0 12h26M0 14.500h26" stroke="#e01010" strokeWidth="1.300" /></svg>
        </button>
        <button type="button" aria-label="No rubberband" className={clsx(cell, 'flex w-[37px] items-center justify-center')}>
          <svg viewBox="0 0 26 26" className="size-[26px]"><path d="M5 21c-4-3 1-9 8-13s11-1 9 2-10 10-15 11M8 18c4 0 12-6 13-9" fill="none" stroke="#555" strokeWidth="2.500" /><path d="M1 1l24 24M24 4L3 24" stroke="#e01010" strokeWidth="1.800" /></svg>
        </button>
        <div className={clsx(cell, 'flex flex-1 items-center px-1')}><hr className="w-full border-[#aaa]" /></div>
      </div>
    </Window>
  )
}

/* ---------- PCB Layout ---------- */

const pcbLayers = [
  ['Top Assy', 'bg-[#8c8c8c]'], ['Top Silk', 'bg-[#009900]'], ['Top Mask', 'bg-[#c3d3df]'], ['Top Paste', 'bg-[#97832e]'],
  ['Top', 'bg-black', '(1)'], ['Bottom', 'bg-black', '(2)'], ['Bottom Paste', 'bg-[#97832e]'],
]

function PcbCanvas() {
  return (
    <svg viewBox="867 802 448 347" className="block h-auto min-w-0 flex-1 bg-white" role="img" aria-label="Layout">
      <g shapeRendering="crispEdges">
        {range(0, 12).flatMap(i => range(0, 10).map(j => <rect key={`${i}-${j}`} x={885 + i * 33.500} y={807 + j * 33.300} width="1" height="1" />))}
      </g>
      <g transform="translate(873.500 1087.800) scale(1.250) translate(-269.300 -1010)"><Copper color="#000" /></g>
    </svg>
  )
}

function PcbLayout() {
  const [on, setOn] = useState(pcbLayers.map(() => true))
  const logo = (
    <svg viewBox="0 0 16 16" className="size-4" aria-hidden="true">
      <path d="M8 0l8 7-8 9-8-8z" fill="#3a9a50" /><path d="M3 8l5-5M5 10l6-6M7 12l6-6M8 14l5-6" stroke="#d8f0d8" strokeWidth="1.200" />
    </svg>
  )
  return (
    <Window title="PCB Layout" icon={logo} className="ml-3 mr-[68px]">
      <Menu items={[['', 'F', 'ile'], ['', 'E', 'dit'], ['', 'V', 'iew'], ['', 'O', 'bjects'], ['', 'P', 'lacement'], ['', 'R', 'oute'], ['', 'H', 'igh Speed'], ['Ver', 'i', 'fication'], ['', 'L', 'ibrary'], ['', 'T', 'ools'], ['Help', '', '']]} />
      <div className="flex flex-col items-start">
        <Strip items={['new', 'open', 'save', '|', 'print', 'preview', 'doc',
          <button type="button" className="w-[30px] text-sm font-bold text-[#1a1a90]">3D</button>,
          '|', 'cut', 'copy', 'paste', '|', '~undo', '~redo', '|', 'magBox', 'magFit', 'magPrev',
          <Combo label="Zoom" value="881%" className="ml-1 w-[65px]" />, '|',
          <Combo label="Grid" value="0,05 in" className="mx-1 w-[77px]" />]} />
        <div className="flex">
          <Strip items={[<Tool name="cursor" wide pressed />, 'ruler', 'plus', '|', 'chip',
            <Combo label="Side" value="Top Side" className="ml-1 w-[97px]" />, <span className="w-1" />, 'binoc', '|',
            'seg', 'via', 'aTool', 'hole', 'pour', 'shape', '|', 'dim', 'table']} />
          <Strip items={['loop', 'hand', 'hand', '|', 'pulse', 'pulse2']} />
        </div>
        <div className="flex">
          <Strip items={['shapes', <button type="button" className="w-[30px] font-['DejaVu_Serif',serif] text-[11px] text-black [font-variant:small-caps]">Abc</button>, 'image',
            <Combo label="Text layer" value="Top Assy" className="ml-1 mr-1 w-[108px]" />]} />
          <Strip items={['align', '|', 'group', 'ungroup', '|', 'props']} />
        </div>
        <Strip items={['route', 'routeHand', 'routeCut', 'routeList', '|', 'play', 'playList', '|', 'drc', 'drcList', '|',
          <Combo label="Route layer" value="Top (1)" className="mx-1 w-[97px]" />]} />
      </div>
      <div className="flex">
        <div className="flex min-w-0 flex-1 flex-col">
          <div className="flex">
            <div className="w-[25px] shrink-0">
              <button type="button" className="flex h-[130px] w-[25px] flex-col items-center gap-2 border border-[#999] border-l-white pt-1 text-xs text-black">
                <svg viewBox="0 0 8 12" className="h-3 w-2 shrink-0"><path d="M0 0l8 6-8 6z" /></svg>
                <span className="[writing-mode:vertical-rl]">Place Component</span>
              </button>
            </div>
            <PcbCanvas />
          </div>
          <div className="flex h-[18px] items-center border-t border-[#ccc] px-2">
            <svg viewBox="0 0 4 6" className="h-[6px] w-1"><path d="M4 0L0 3l4 3z" /></svg>
            <span className="mx-auto h-[14px] w-[14px] border border-[#999] bg-[#ddd]" />
            <svg viewBox="0 0 4 6" className="h-[6px] w-1"><path d="M0 0l4 3-4 3z" /></svg>
          </div>
        </div>
        <div className="flex w-[18px] shrink-0 flex-col items-center border-l border-[#ccc] py-2">
          <Caret className="rotate-180" />
          <span className="mt-auto h-[14px] w-[14px] border border-[#999] bg-[#ddd]" />
          <Caret className="mb-[18px] mt-auto" />
        </div>
        <aside className="w-[237px] shrink-0 pl-[2px] pt-1 text-xs text-black">
          <div className="flex items-end">
            <button type="button" className="relative z-10 -mb-px h-[23px] w-[50px] border border-b-0 border-[#999] bg-white">Layers</button>
            <button type="button" className="h-5 w-[52px] border border-b-0 border-[#999] bg-[linear-gradient(180deg,#f0f0f0,#d4d4d4)]">Objects</button>
            <button type="button" className="h-5 w-[65px] border border-b-0 border-[#999] bg-[linear-gradient(180deg,#f0f0f0,#d4d4d4)]">Properties</button>
          </div>
          <div className="mr-2 h-[187px] border border-[#999] bg-white px-2 pt-[6px]">
            <div className="flex h-[148px] overflow-hidden border border-[#999] pl-px">
              <ul className="flex-1">
                {pcbLayers.map(([name, color, n], i) => (
                  <li key={name} className="h-[21px] border-b border-[#e4e4e4]">
                    <label className="flex h-5 items-center">
                      <span className="relative flex h-full w-7 items-center justify-center">
                        <input type="checkbox" className="absolute inset-0 appearance-none" checked={on[i]} onChange={() => setOn(on.map((v, k) => (k === i ? !v : v)))} />
                        {on[i] && <svg viewBox="0 0 18 15" className="h-[15px] w-[18px]"><path d="M0 8l3-2 4 4C10 5 13 2 18 0 14 4 11 9 8 15H6z" fill="#1c5fb8" /></svg>}
                      </span>
                      <span className={clsx('ml-[2px] h-[18px] w-[25px]', color)} />
                      <span className="ml-[7px]">{name}</span>
                      <span className="ml-auto mr-1">{n}</span>
                    </label>
                  </li>
                ))}
              </ul>
              <div className="flex w-[18px] flex-col items-center bg-[#f0f0f0] py-2">
                <Caret className="rotate-180" />
                <span className="mt-2 h-[14px] w-[14px] border border-[#999] bg-[#e2e2e2]" />
                <Caret className="mt-auto" />
              </div>
            </div>
            <div className="flex h-8 items-center">
              <Tool name="addLayer" wide /><Tool name="layerList" wide className="ml-1" />
              <Combo label="Contrast mode" value="Contrast" className="ml-[26px] w-24" />
              <Tool name="squares" />
            </div>
          </div>
          <div className="mt-1 border-t border-[#ccc] pl-2 pr-[14px]">
            <div className="flex h-9 items-center">
              <h3 className="mr-auto">Design Manager</h3>
              <Tool name="tree" wide /><Tool name="chip" pressed /><Tool name="route" wide />
            </div>
            <div className="h-11 border border-[#999] bg-white" />
            <h3 className="flex h-6 items-center">Component Pins:</h3>
            <div className="h-10 border border-[#999] bg-white" />
          </div>
        </aside>
      </div>
      <footer className="flex h-[23px] items-center justify-end border-t border-[#bbb] text-xs text-black">
        <span className="w-[100px] border-l border-[#ccc] pl-1">X=0,85 in</span>
        <span className="w-[100px] border-l border-[#ccc] pl-1">Y=0,25 in</span>
      </footer>
    </Window>
  )
}

export default function App() {
  return (
    <main className="grid min-h-screen grid-cols-[minmax(0,822fr)_minmax(0,824fr)] items-start bg-white font-['Roboto',sans-serif]">
      <div className="flex min-w-0 flex-col gap-[38px]">
        <Preview tracks={8} points={316} tone="dark" className="mr-[54px]">
          <Plot
            box={[20, 82, 728, 468]} ox={63.5} oy={506.5} left={2} down={2} right={744} last={35} labelX={50} labelEnd={547}
            hint={{ x: 598, y: 131, pos: 'X:13,99 Y:13,79' }} marks={[[236, 133], [674, 134]]}
          >
            <g fill="none" stroke="#7d2cc8" strokeWidth="4" shapeRendering="crispEdges">
              {outlines.map(d => <path key={d} d={d} />)}
              <path stroke="#f2d524" d="M277 369H313V379H335V369H371V405H335V394H313V405H277Z" />
            </g>
          </Plot>
        </Preview>
        <SprintLayout />
      </div>
      <div className="flex min-w-0 flex-col gap-[21px] pt-1">
        <Preview tracks={226} points={2064} className="mr-[63px]">
          <Plot
            box={[842, 86, 721, 489]} ox={865.5} oy={508.5} left={1} down={3} right={1561} last={36} labelX={852} labelEnd={549}
            hint={{ x: 1413, y: 135, pos: 'X:17,00 Y:13,85' }} marks={[[991, 166], [1498, 167]]}
          >
            <g fill="none" stroke="#8c2323">
              {pads.map(([x, y, w, h]) => <rect key={`${x},${y}`} x={x + 0.5} y={y + 0.5} width={w} height={h} />)}
              {ovals.map(([x, y]) => (
                <g key={`${x},${y}`}>
                  <circle cx={x} cy={y} r="14.500" /><circle cx={x + 29} cy={y} r="14.500" /><rect x={x} y={y - 14.5} width="29" height="29" />
                </g>
              ))}
              {runs.map((run, i) => (
                <g key={i}>
                  {run.slice(1).map((p, k) => <path key={k} d={segment(run[k], p)} />)}
                  {run.map(([x, y], k) => <circle key={k} cx={x} cy={y} r="7.500" />)}
                </g>
              ))}
              <path d="M1012 162.500h23M1474 162.500h20" />
              <rect x="1324" y="322" width="29" height="30" stroke="#ffd000" strokeWidth="3" />
            </g>
          </Plot>
        </Preview>
        <PcbLayout />
      </div>
    </main>
  )
}
